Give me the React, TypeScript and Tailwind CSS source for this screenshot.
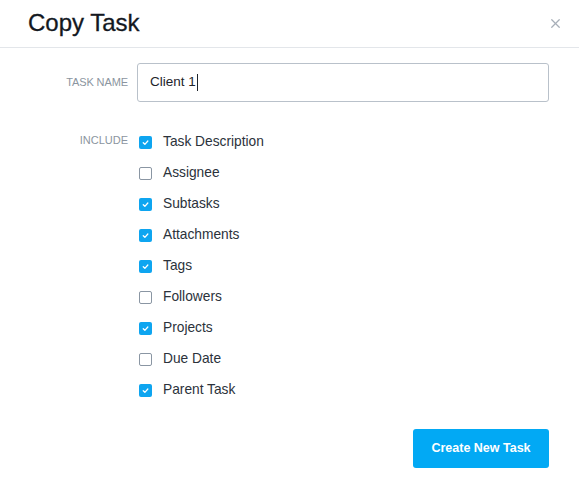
import { X } from 'lucide-react';

const options = [
  { label: 'Task Description', checked: true },
  { label: 'Assignee', checked: false },
  { label: 'Subtasks', checked: true },
  { label: 'Attachments', checked: true },
  { label: 'Tags', checked: true },
  { label: 'Followers', checked: false },
  { label: 'Projects', checked: true },
  { label: 'Due Date', checked: false },
  { label: 'Parent Task', checked: true },
];

function Checkbox({ checked }: { checked: boolean }) {
  if (checked) {
    return (
      <span className="flex h-[13px] w-[13px] items-center justify-center rounded-[2px] bg-[#0ea5f0]">
        <svg width="9" height="9" viewBox="0 0 10 10" fill="none">
          <path d="M2.5 5.2 L4.3 7 L7.6 3.3" stroke="white" strokeWidth="1.4" strokeLinecap="round" strokeLinejoin="round" />
        </svg>
      </span>
    );
  }
  return <span className="h-[13px] w-[13px] rounded-[2px] border border-[#8a96a3] bg-white" />;
}

export default function App() {
  return (
    <div className="w-[579px] h-[482px] bg-white text-[#2b323b]" style={{ fontFamily: '"Liberation Sans", Arial, sans-serif' }}>
      <div className="flex h-[48px] items-center justify-between border-b border-[#e3e6ea] pl-[28px] pr-[16px]">
        <h1 className="text-[24px] leading-none text-[#14181f] -mt-[2px] [-webkit-text-stroke:0.3px_#14181f]">Copy Task</h1>
        <X size={15} strokeWidth={2} className="text-[#a7afb8] -mt-[1px]" />
      </div>

      <div className="px-[30px] pt-[15px]">
        <div className="flex items-center">
          <label className="w-[98px] text-right text-[11px] tracking-[-0.1px] text-[#8b95a0]">TASK NAME</label>
          <div className="ml-[9px] flex h-[39px] w-[412px] items-center rounded-[3px] border border-[#b9c1ca] pl-[12px] text-[13.5px] text-[#1e242b]">
            Client 1
            <span className="ml-[1px] h-[17px] w-px bg-[#1e242b]" />
          </div>
        </div>

        <div className="mt-[25px] flex">
          <label className="w-[98px] pt-[8px] text-right text-[11px] leading-none text-[#8b95a0]">INCLUDE</label>
          <div className="ml-[11px] flex flex-col">
            {options.map((o) => (
              <div key={o.label} className="flex h-[31px] items-center gap-[11px]">
                <Checkbox checked={o.checked} />
                <span className="text-[13.75px] text-[#2b323b]">{o.label}</span>
              </div>
            ))}
          </div>
        </div>

        <div className="mt-[23px] flex justify-end">
          <button className="h-[39px] w-[136px] rounded-[3px] bg-[#02a9f4] text-[12.5px] font-bold text-white">
            Create New Task
          </button>
        </div>
      </div>
    </div>
  );
}
